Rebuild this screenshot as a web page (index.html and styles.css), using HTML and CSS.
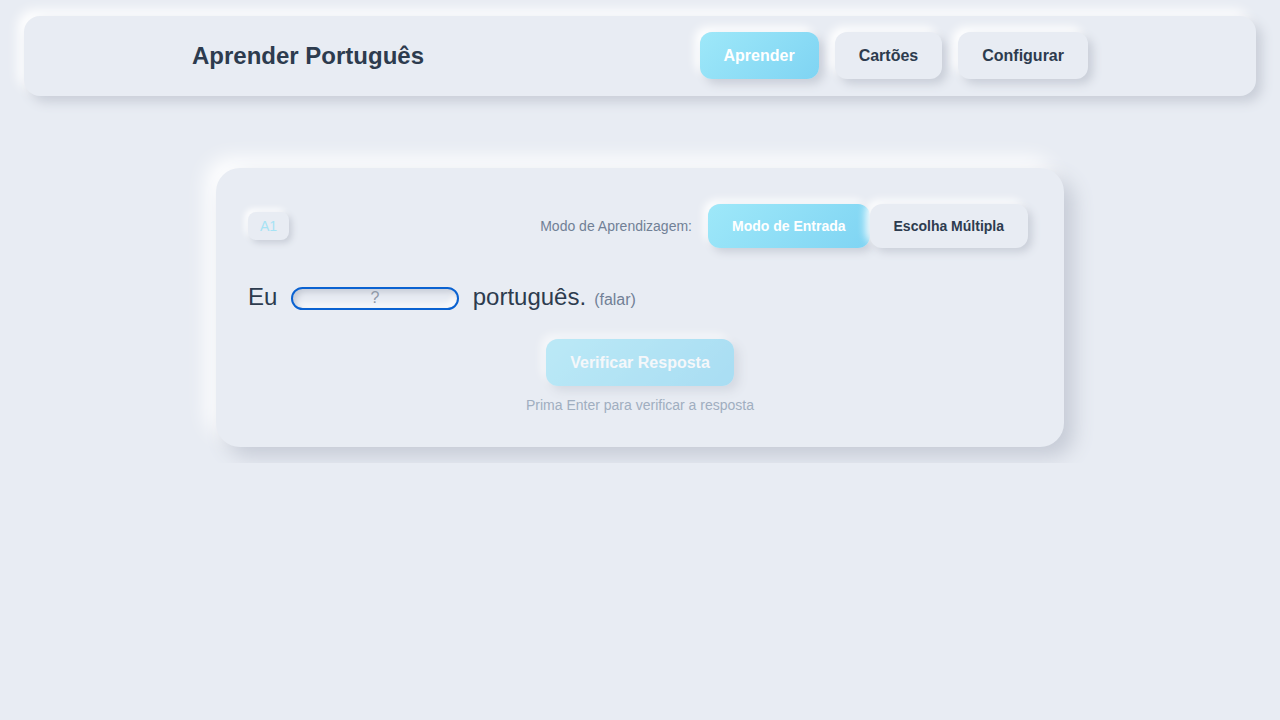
FILE: index.html
```html
<!DOCTYPE html>
<html lang="pt">
<head>
<meta charset="utf-8">
<title>Aprender Português</title>
<link rel="stylesheet" href="styles.css">
</head>
<body>
<div class="app">
  <header class="topbar">
    <div class="topbar-inner">
      <h1 class="brand">Aprender Português</h1>
      <nav class="nav">
        <button class="btn btn-active">Aprender</button>
        <button class="btn">Cartões</button>
        <button class="btn">Configurar</button>
      </nav>
    </div>
  </header>

  <main class="card">
    <div class="card-head">
      <span class="badge">A1</span>
      <div class="mode">
        <span class="mode-label">Modo de Aprendizagem:</span>
        <div class="mode-group">
          <button class="mode-btn mode-active">Modo de Entrada</button>
          <button class="mode-btn">Escolha Múltipla</button>
        </div>
      </div>
    </div>

    <p class="sentence">Eu <input class="answer" type="text" placeholder="?"> português.<span class="hint-verb">(falar)</span></p>

    <div class="actions">
      <button class="btn btn-check">Verificar Resposta</button>
      <p class="help">Prima Enter para verificar a resposta</p>
    </div>
  </main>
</div>
</body>
</html>
```

FILE: styles.css
```css
* { box-sizing: border-box; }

html, body {
  margin: 0;
  padding: 0;
  background: #e8ecf3;
  font-family: "Liberation Sans", Arial, Helvetica, sans-serif;
  color: #2d3b4e;
}

.app {
  padding: 16px 24px;
}

.topbar {
  background: #e8ecf3;
  border-radius: 16px;
  padding: 16px 0;
  height: 80px;
  box-shadow: 6px 6px 12px #c9ced8, -6px -6px 12px #ffffff;
}

.topbar-inner {
  max-width: 896px;
  margin: 0 auto;
  display: flex;
  align-items: center;
  justify-content: space-between;
  height: 47px;
}

.brand {
  margin: 0;
  font-size: 24px;
  font-weight: 700;
  color: #2d3b4e;
}

.nav {
  display: flex;
  gap: 16px;
}

.btn {
  font-family: inherit;
  font-size: 16px;
  font-weight: 700;
  line-height: 19px;
  padding: 14px 24px;
  border: none;
  border-radius: 12px;
  background: #e8ecf3;
  color: #2d3b4e;
  box-shadow: 5px 5px 10px #c9ced8, -5px -5px 10px #ffffff;
  cursor: pointer;
}

.btn-active {
  background: linear-gradient(135deg, #9ee8f9, #7fd4f3);
  color: #ffffff;
}

.card {
  width: 848px;
  margin: 72px auto 0;
  background: #e8ecf3;
  border-radius: 24px;
  padding: 32px 32px 34px;
  box-shadow: 10px 10px 20px #c6cbd6, -10px -10px 20px #ffffff;
}

.card-head {
  display: flex;
  align-items: center;
  justify-content: space-between;
}

.badge {
  font-size: 14px;
  line-height: 16px;
  padding: 6px 12px;
  border-radius: 8px;
  color: #a6e3f5;
  background: #e8ecf3;
  box-shadow: 3px 3px 6px #c9ced8, -3px -3px 6px #ffffff;
}

.mode {
  display: flex;
  align-items: center;
  gap: 12px;
}

.mode-label {
  font-size: 14px;
  color: #718096;
}

.mode-group {
  display: flex;
  padding: 4px;
}

.mode-btn {
  font-family: inherit;
  font-size: 14px;
  font-weight: 700;
  line-height: 16px;
  padding: 14px 24px;
  border: none;
  border-radius: 12px;
  background: #e8ecf3;
  color: #2d3b4e;
  box-shadow: 4px 4px 8px #c9ced8, -4px -4px 8px #ffffff;
}

.mode-active {
  background: linear-gradient(135deg, #9ee8f9, #7fd4f3);
  color: #ffffff;
}

.sentence {
  margin: 27px 0 0;
  font-size: 24px;
  line-height: 36px;
  color: #2d3b4e;
}

.answer {
  width: 168px;
  height: 23px;
  margin: 0 7px;
  padding: 0;
  border: 2px solid #0a62d1;
  border-radius: 12px;
  background: #e8ecf3;
  box-shadow: inset 3px 3px 6px #c4c9d4, inset -3px -3px 6px #ffffff;
  font-family: inherit;
  font-size: 16px;
  text-align: center;
  outline: none;
  vertical-align: 2px;
}

.answer::placeholder {
  color: #8f99a8;
}

.hint-verb {
  font-size: 16px;
  color: #718096;
  margin-left: 8px;
}

.actions {
  display: flex;
  flex-direction: column;
  align-items: center;
  margin-top: 21px;
}

.btn-check {
  opacity: 0.6;
  background: linear-gradient(135deg, #9ee8f9, #7fd4f3);
  color: #ffffff;
}

.help {
  margin: 11px 0 0;
  font-size: 14px;
  line-height: 16px;
  color: #a0aec0;
}
```
